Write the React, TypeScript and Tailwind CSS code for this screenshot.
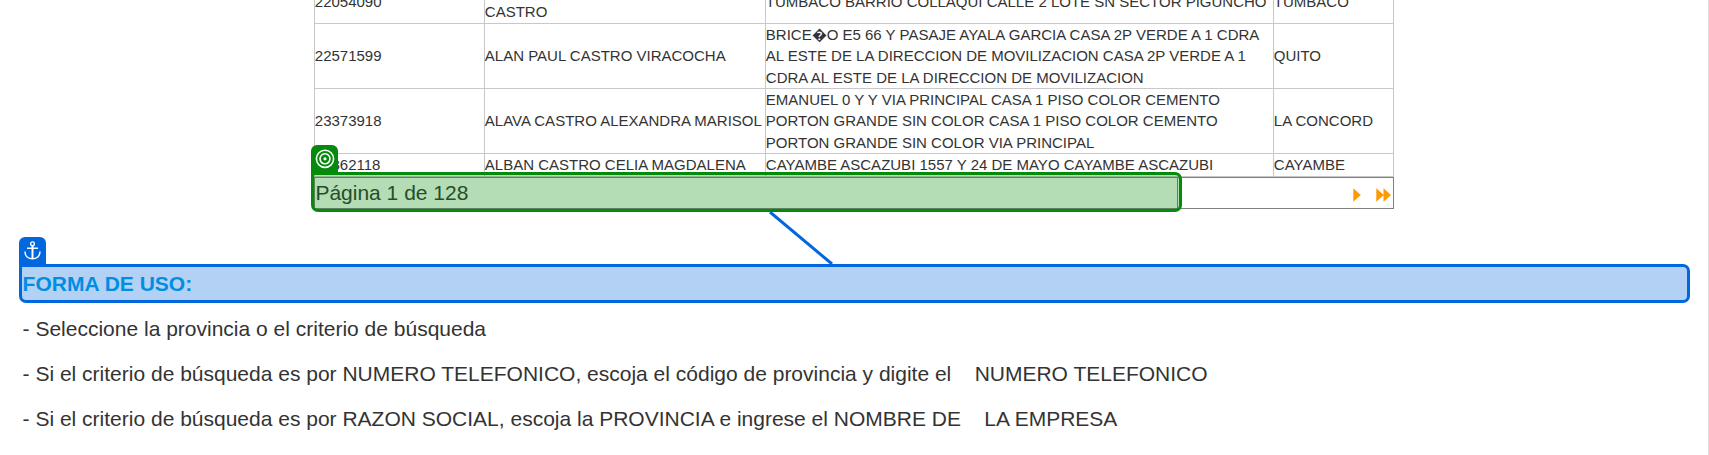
import React from "react";

type Row = { phone: string; name: string[]; address: string[]; city: string; size: string };

const rows: Row[] = [
  {
    phone: "22054090",
    name: ["\u00a0", "CASTRO"],
    address: ["TUMBACO BARRIO COLLAQUI CALLE 2 LOTE SN SECTOR PIGUNCHO"],
    city: "TUMBACO",
    size: "h-11",
  },
  {
    phone: "22571599",
    name: ["ALAN PAUL CASTRO VIRACOCHA"],
    address: [
      "BRICE\ufffdO E5 66 Y PASAJE AYALA GARCIA CASA 2P VERDE A 1 CDRA",
      "AL ESTE DE LA DIRECCION DE MOVILIZACION CASA 2P VERDE A 1",
      "CDRA AL ESTE DE LA DIRECCION DE MOVILIZACION",
    ],
    city: "QUITO",
    size: "h-[65px]",
  },
  {
    phone: "23373918",
    name: ["ALAVA CASTRO ALEXANDRA MARISOL"],
    address: [
      "EMANUEL 0 Y Y VIA PRINCIPAL CASA 1 PISO COLOR CEMENTO",
      "PORTON GRANDE SIN COLOR CASA 1 PISO COLOR CEMENTO",
      "PORTON GRANDE SIN COLOR VIA PRINCIPAL",
    ],
    city: "LA CONCORD",
    size: "h-[65px]",
  },
  {
    phone: "22362118",
    name: ["ALBAN CASTRO CELIA MAGDALENA"],
    address: ["CAYAMBE ASCAZUBI 1557 Y 24 DE MAYO CAYAMBE ASCAZUBI"],
    city: "CAYAMBE",
    size: "h-[23px]",
  },
];

function Cell({ lines }: { lines: string[] }) {
  return (
    <div
      className={`flex flex-col justify-center border-r border-[#c8c8c8] ${lines.length === 2 ? "pb-px" : ""}`}
    >
      {lines.map((line, i) => (
        <span key={i} className="-ml-[0.2px] block whitespace-nowrap">
          {line}
        </span>
      ))}
    </div>
  );
}

export default function App() {
  return (
    <div className="relative h-[455px] w-full overflow-hidden border-r border-[#dddddd] bg-white font-['Liberation_Sans',Arial,sans-serif] text-[21px] text-[#333333]">
      <div className="ml-[314px] -mt-5 w-[1080px] border-l border-[#c8c8c8] text-[15px] leading-[21.4px]">
        {rows.map((row) => (
          <div
            key={row.phone}
            className={`grid grid-cols-[170px_281px_508px_120px] border-b border-[#c8c8c8] ${row.size}`}
          >
            <Cell lines={[row.phone]} />
            <Cell lines={row.name} />
            <Cell lines={row.address} />
            <Cell lines={[row.city]} />
          </div>
        ))}
      </div>

      <div className="ml-[314px] flex h-8 w-[1080px] border border-[#808080]">
        <div className="flex w-[863px] items-center border-r border-[#808080] pl-[0.4px] leading-[30px]">
          Página 1 de 128
        </div>
        <div className="flex flex-1 items-center justify-end gap-[15px] pt-1 pr-0.5">
          <svg width="8" height="14" viewBox="0 0 8 14" fill="#ff9900">
            <path d="M0.3 0.2 7.8 7 0.3 13.8Z" />
          </svg>
          <svg width="15" height="14" viewBox="0 0 15 14" fill="#ff9900">
            <path d="M0.3 0.2 7.8 7 0.3 13.8ZM7.5 0.2 15 7 7.5 13.8Z" />
          </svg>
        </div>
      </div>

      <div className="mt-[52px] ml-[22.6px] leading-[45px]">
        <h2 className="font-bold text-[#009fe3]">FORMA DE USO:</h2>
        <p>- Seleccione la provincia o el criterio de búsqueda</p>
        <p className="whitespace-pre">
          {"- Si el criterio de búsqueda es por NUMERO TELEFONICO, escoja el código de provincia y digite el\u00a0\u00a0\u00a0 NUMERO TELEFONICO"}
        </p>
        <p className="whitespace-pre">
          {"- Si el criterio de búsqueda es por RAZON SOCIAL, escoja la PROVINCIA e ingrese el NOMBRE DE\u00a0\u00a0\u00a0 LA EMPRESA"}
        </p>
      </div>

      <div className="absolute top-[172px] left-[311px] h-10 w-[871px] rounded-[7px] rounded-tl-none border-[3px] border-[#058a0b] bg-[#058a0b]/30" />
      <div className="absolute top-[145px] left-[311px] flex h-[27px] w-[27px] items-center justify-center rounded-t-[6px] bg-[#058a0b]">
        <svg width="20" height="20" viewBox="0 0 20 20" fill="none" stroke="#fff" strokeWidth="1.6">
          <circle cx="10" cy="9.8" r="8.6" />
          <circle cx="10" cy="9.8" r="5" />
          <circle cx="10" cy="9.8" r="1.6" fill="#fff" stroke="none" />
        </svg>
      </div>

      <div className="absolute top-[264px] left-[19px] h-[39px] w-[1671px] rounded-[7px] rounded-tl-none border-[3px] border-[#0067df] bg-[#0067df]/30" />
      <div className="absolute top-[237px] left-[19px] flex h-[27px] w-[27px] items-center justify-center rounded-t-[6px] bg-[#0067df]">
        <svg width="17" height="19" viewBox="0 0 17 19" fill="none" stroke="#fff" strokeWidth="1.4">
          <circle cx="8.5" cy="2.8" r="1.9" />
          <path d="M3 7.2H14M1 10.5C1 15.3 4.5 17.8 8.5 17.8S16 15.3 16 10.5" />
          <path d="M8.5 4.8V17.8" strokeWidth="2" />
        </svg>
      </div>

      <svg className="absolute top-[212px] left-[768px]" width="66" height="53" viewBox="0 0 66 53">
        <path d="M2 0 64 52" stroke="#0067df" strokeWidth="3" />
      </svg>
    </div>
  );
}
